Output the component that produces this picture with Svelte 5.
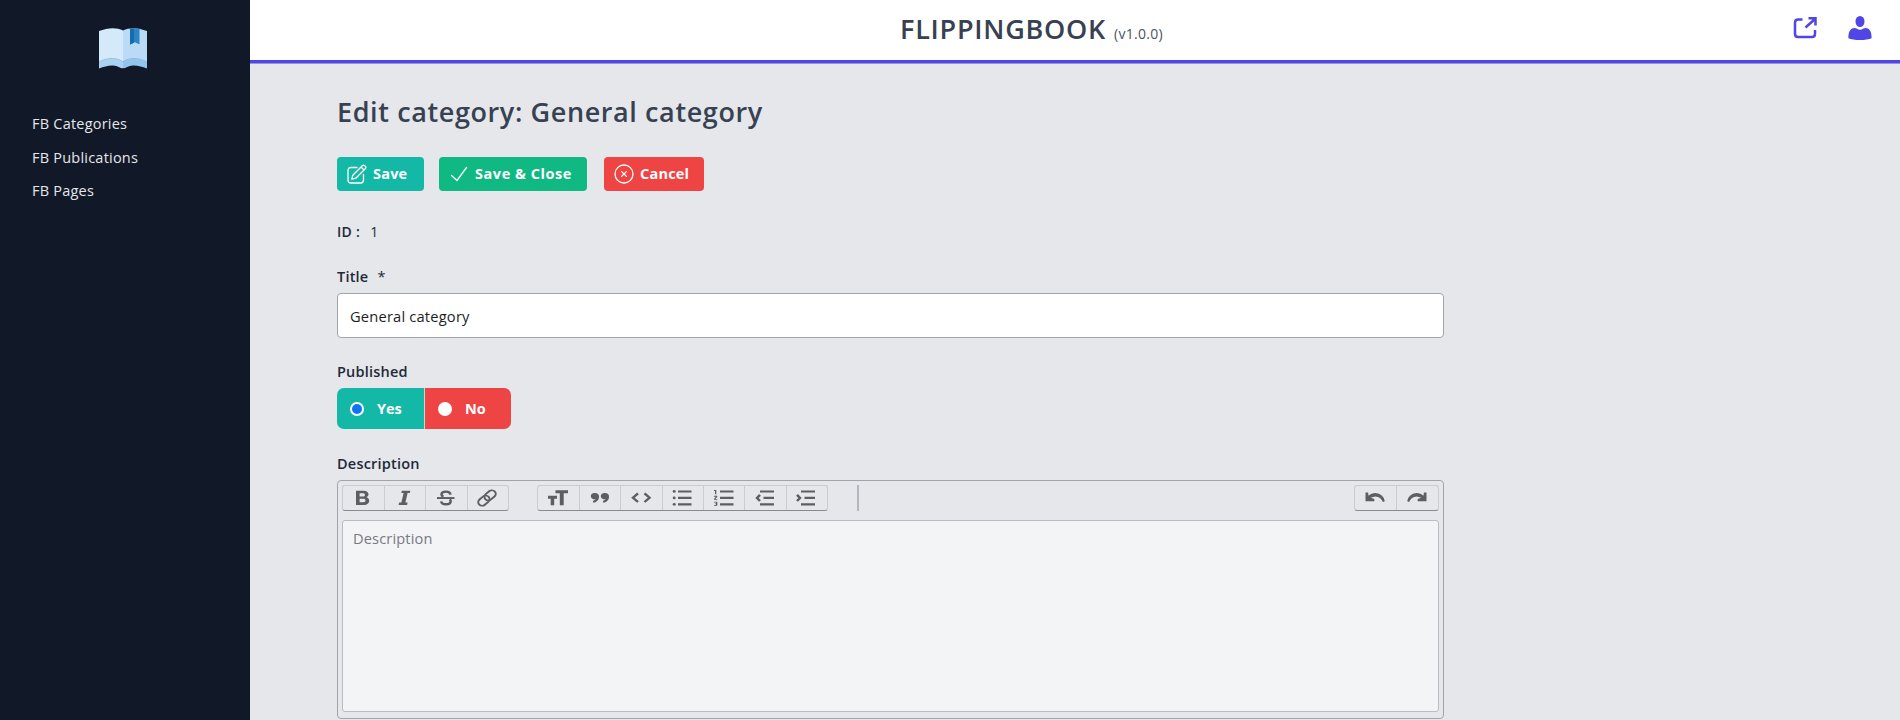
<script>
  const nav = ['FB Categories', 'FB Publications', 'FB Pages'];
  let title = $state('General category');
  let published = $state('yes');
</script>

{#snippet icon(name)}
  <svg class="tool" viewBox="0 0 24 24" preserveAspectRatio="none" aria-hidden="true">
    {#if name === 'bold'}
      <path fill-rule="evenodd" d="M5 4h7.600c3 0 4.900 1.500 4.900 4 0 1.600-.9 2.700-2.200 3.200 1.800.4 2.900 1.800 2.900 3.700 0 2.800-2 4.600-5.200 4.600H5zm3.600 2.900v3.400h3.100c1.500 0 2.200-.6 2.200-1.700s-.7-1.700-2.100-1.700zm0 6v3.700h3.600c1.500 0 2.300-.7 2.300-1.900s-.8-1.800-2.300-1.800z" />
    {:else if name === 'italic'}
      <path d="M8.800 4h8.500l-.5 2.500h-2.200l-2.200 10.500h2.200l-.5 2.500H5.600l.5-2.500h2.300l2.200-10.500H8.300z" />
    {:else if name === 'strike'}
      <path d="M3 11h17.500v2.100H3z" />
      <path class="line" d="M16.500 8.400C16.200 6 14.500 5 12 5S7.500 6 7.500 8.200q0 1.600 2 2.300M7.200 15.600c.3 2.200 2.100 3.200 4.700 3.200s4.800-1.100 4.800-3.300q0-1.200-1-2" />
    {:else if name === 'link'}
      <g class="line thin" transform="rotate(-43 12 12)">
        <rect x="1.500" y="8.100" width="12.500" height="7.800" rx="3.900" />
        <rect x="10" y="8.100" width="12.500" height="7.800" rx="3.900" />
      </g>
    {:else if name === 'heading'}
      <path d="M9.500 3.500H22v3.300h-4.300V20h-3.900V6.800H9.500zM2 9.500h9v3.300H8.200V20H4.700v-7.200H2z" />
    {:else if name === 'quote'}
      <path d="M7 6.500a4 4 0 0 1 4 4c0 3.500-2.300 6.300-6 6.500v-2c1.500-.3 2.200-.9 2.500-1.800A3.500 3.500 0 1 1 7 6.500zM17 6.500a4 4 0 0 1 4 4c0 3.500-2.300 6.300-6 6.500v-2c1.500-.3 2.200-.9 2.500-1.800A3.500 3.500 0 1 1 17 6.500z" />
    {:else if name === 'code'}
      <path class="line" d="m9 7-5 4.700 5 4.700M15.500 7l5 4.700-5 4.700" />
    {:else if name === 'bullets'}
      <path d="M8 3.700h13.500v2.400H8zM8 10.700h13.500v2.400H8zM8 17.700h13.500v2.400H8z" />
      <circle cx="4.200" cy="4.900" r="1.500" /><circle cx="4.200" cy="11.900" r="1.500" /><circle cx="4.200" cy="18.900" r="1.500" />
    {:else if name === 'numbers'}
      <path d="M8 3.700h13.500v2.400H8zM8 10.700h13.500v2.400H8zM8 17.700h13.500v2.400H8zM2 16h3.300v4.500H2v-1h2v-.6H3v-1h1V17H2zM3 8h1.300V3.300H2v1h1zM2 10.700V9.600h3.300v1.100L3.400 13h1.900v1H2v-.9l1.800-2.400z" />
    {:else if name === 'outdent'}
      <path d="M7 3.700h14v2.400H7zM10.500 10.700H21v2.400H10.500zM7 17.700h14v2.400H7z" />
      <path class="line" d="m7 8.600-3 3.300 3 3.300" />
    {:else if name === 'indent'}
      <path d="M7 3.700h14v2.400H7zM10.500 10.700H21v2.400H10.500zM7 17.700h14v2.400H7z" />
      <path class="line" d="m3 8.600 3 3.300-3 3.300" />
    {:else if name === 'undo'}
      <path d="M12.500 6.600c-2.600 0-5 1-6.900 2.900L5 6H2.500v9.500h8.800v-2.300l-3.600-1.400a8 8 0 0 1 12.100 4.500l2-.8A10 10 0 0 0 12.500 6.600z" />
    {:else}
      <path d="M11.500 6.600c2.600 0 5 1 6.900 2.900L19 6h2.500v9.500h-8.800v-2.300l3.600-1.400a8 8 0 0 0-12.100 4.500l-2-.8A10 10 0 0 1 11.500 6.600z" />
    {/if}
  </svg>
{/snippet}

{#snippet group(names)}
  <div class="group">
    {#each names as name}
      <button type="button" aria-label={name}>{@render icon(name)}</button>
    {/each}
  </div>
{/snippet}

<div class="page">
  <aside>
    <svg class="logo" viewBox="0 0 48 40" preserveAspectRatio="none" aria-hidden="true">
      <path fill="#d4e9f9" d="M0 3C9-.7 18-.7 24 2.500V35L0 36z" />
      <path fill="#b9dbf7" d="M24 2.500C30-.7 39-.7 48 3v33l-24-1z" />
      <path fill="#a9d3f4" d="M0 33.500c9-4.500 18-4.500 24 0V39c-3 1-4-2-10-2.300C9 36.500 5 38 0 39.500z" />
      <path fill="#90c5ef" d="M24 33.500c6-4.500 15-4.500 24 0v6c-5-1.500-9-3-14-2.800C28 37 27 40 24 39z" />
      <path fill="none" stroke="#86a9c6" stroke-width=".7" d="M0 33c9-4.300 18-4.300 24 0 6-4.300 15-4.300 24 0" />
      <path fill="#2b84c3" d="M31 .4h9.500v15.500L35.700 14 31 16z" />
      <path fill="#176dab" d="M31 .4h4V14.300L31 16z" />
    </svg>
    <nav>
      {#each nav as item}
        <a href="#top">{item}</a>
      {/each}
    </nav>
  </aside>

  <div class="body">
    <header>
      <div class="brand"><span class="name">FLIPPINGBOOK</span><span class="version">(v1.0.0)</span></div>
      <div class="actions">
        <svg class="ext" viewBox="0 0 24 22" aria-hidden="true">
          <path d="M9.500 2.500H5Q2 2.500 2 5.500V17q0 3 3 3h14q3 0 3-3v-4M12.500 10.500 22 2M15.500 1.300h7v7.200" />
        </svg>
        <svg class="user" viewBox="0 0 24 24" aria-hidden="true">
          <ellipse cx="12" cy="5.500" rx="4.500" ry="5.500" />
          <path d="M.4 22.200C.4 16 2 12.300 6.500 12c2 0 3 1.700 5.500 1.700s3.500-1.700 5.500-1.700c4.500.3 6.100 4 6.100 10.200C19 24.600 5 24.600.4 22.200z" />
        </svg>
      </div>
    </header>

    <main>
      <h1>Edit category: General category</h1>
      <div class="buttons">
        <button type="button" class="save">
          <svg viewBox="0 0 20 20" aria-hidden="true"><path d="M10 3.500H4Q1 3.500 1 6.500V16q0 3 3 3h9.500q3 0 3-3v-5.500M4.800 15.200l1-4L15.500 1.500q1-.9 2.200.2l.6.6q1.100 1.100.2 2.200L8.800 14.200zM14 3l3 3" /></svg>
          <span>Save</span>
        </button>
        <button type="button" class="close">
          <svg viewBox="0 0 20 20" aria-hidden="true"><path d="m2.500 11.500 5.500 5L17.500 3.500" /></svg>
          <span>Save &amp; Close</span>
        </button>
        <button type="button" class="cancel">
          <svg viewBox="0 0 20 20" aria-hidden="true"><circle cx="10" cy="10" r="9" /><path d="m7.600 7.600 4.800 4.800m0-4.800-4.800 4.800" /></svg>
          <span>Cancel</span>
        </button>
      </div>

      <div class="id"><span>ID :</span><span class="value">1</span></div>

      <label class="caption title-label" for="title">Title<span class="star">*</span></label>
      <input id="title" class="text" bind:value={title} />

      <div class="caption pub">Published</div>
      <div class="switch">
        <label class="yes"><input type="radio" value="yes" bind:group={published} /><span>Yes</span></label>
        <label class="no"><input type="radio" value="no" bind:group={published} /><span>No</span></label>
      </div>

      <div class="caption desc">Description</div>
      <div class="editor">
        <div class="toolbar">
          {@render group(['bold', 'italic', 'strike', 'link'])}
          {@render group(['heading', 'quote', 'code', 'bullets', 'numbers', 'outdent', 'indent'])}
          <i class="divider"></i>
          {@render group(['undo', 'redo'])}
        </div>
        <div class="area">Description</div>
      </div>
    </main>
  </div>
</div>

<style>
  :global(body) { margin: 0; overflow: hidden; }
  * { box-sizing: border-box; }
  .page { display: flex; height: 720px; overflow: hidden; background: #e5e7eb; color: #1f2937; font: 15px/20px "Open Sans", "Noto Sans", sans-serif; }
  button, input { font: inherit; }
  aside { width: 250px; flex: none; background: #111827; padding: 28px 0 0 32px; }
  .logo { display: block; width: 48px; height: 41px; margin-left: 67px; }
  nav { display: flex; flex-direction: column; padding-top: 38px; }
  nav a { height: 33.600px; line-height: 33px; color: #e5e7eb; text-decoration: none; white-space: nowrap; font-size: 14.500px; letter-spacing: .22px; }
  .body { flex: 1; min-width: 0; }
  header { height: 63px; background: #fff; border-bottom: 3px solid #4f46e5; box-shadow: 0 1px 0 #9692e6; display: flex; justify-content: space-between; padding: 0 28px 0 650px; }
  .brand { display: flex; align-items: baseline; color: #374151; white-space: nowrap; }
  .name { font-size: 27px; line-height: 58px; font-weight: 600; letter-spacing: .75px; }
  .version { font-size: 14px; margin-left: 8px; color: #4b5563; letter-spacing: .3px; }
  .actions { padding-top: 16px; display: flex; gap: 31px; }
  .ext { width: 24px; height: 22px; margin-top: 1px; fill: none; stroke: #4f46e5; stroke-width: 2.500; }
  .user { width: 24px; height: 24px; fill: #4f46e5; }
  main { width: 1107px; margin-left: 87px; }
  h1 { margin: 0; padding-top: 28px; font-size: 27px; line-height: 41px; height: 68px; font-weight: 600; letter-spacing: .61px; color: #374151; white-space: nowrap; }
  .buttons { display: flex; padding-top: 26px; }
  .buttons button { height: 34px; border: 0; border-radius: 4px; padding: 0 0 0 10px; color: #fff; font-weight: 700; font-size: 14.500px; letter-spacing: .2px; display: flex; align-items: center; gap: 6px; white-space: nowrap; }
  .buttons svg { width: 20px; height: 20px; flex: none; fill: none; stroke: #fff; stroke-width: 1.300; stroke-linecap: round; stroke-linejoin: round; }
  .save { width: 87px; background: #14b8a6; }
  .buttons .close { width: 148px; margin: 0 17px 0 15px; background: #10b981; letter-spacing: .55px; }
  .cancel { width: 100px; background: #ef4444; }
  .id { display: flex; gap: 10px; margin-top: 31px; font-weight: 600; font-size: 14px; letter-spacing: .3px; }
  .value { font-weight: 500; }
  .caption { display: block; font-size: 14.500px; font-weight: 600; height: 20px; white-space: nowrap; letter-spacing: .2px; }
  .title-label { margin-top: 25px; }
  .star { margin-left: 9px; font-weight: 400; }
  .text { display: block; width: 1107px; height: 45px; margin-top: 6px; border: 1px solid #a1a4aa; border-radius: 4px; background: #fff; padding: 0 12px; font-size: 14.700px; letter-spacing: .18px; color: #1c1f24; outline: 0; }
  .pub { margin-top: 24px; }
  .switch { display: flex; width: 174px; height: 41px; margin-top: 6px; border-radius: 7px; overflow: hidden; background: #cbd5d8; gap: 1px; }
  .switch label { display: flex; align-items: center; padding-left: 13px; color: #fff; font-weight: 700; font-size: 14.500px; gap: 13px; }
  .switch input { appearance: none; margin: 0; width: 14px; height: 14px; background: #fff; border-radius: 50%; flex: none; }
  .switch input:checked { background: #0d75f5; border: 2px solid #fff; }
  .yes { width: 87px; background: #14b8a6; }
  .no { flex: 1; background: #ef4444; }
  .desc { margin-top: 25px; }
  .editor { margin-top: 6px; height: 239px; border: 1px solid #a1a4aa; border-radius: 4px; padding: 4px; }
  .toolbar { display: flex; height: 26px; }
  .group { display: flex; height: 26px; border: 1px solid #c9cbcf; border-bottom-color: #888b90; border-radius: 3px; width: 167px; }
  .group:nth-child(2) { width: 291px; margin-left: 28px; }
  .group:last-child { width: 85px; margin-left: auto; }
  .group button { flex: 1; border: 0; border-right: 1px solid #cbcdd1; background: transparent; padding: 0 1px 0 0; display: flex; align-items: center; justify-content: center; }
  .group button:first-child { flex: 0 0 42px; }
  .group button:last-child { border-right: 0; }
  .tool { width: 24px; height: 22px; flex: none; fill: #5c5e62; }
  .tool .line { fill: none; stroke: #5c5e62; stroke-width: 2.500; }
  .tool .thin { stroke-width: 2; }
  .divider { width: 2px; background: #b4b6bb; margin-left: 29px; }
  .area { height: 192px; margin-top: 9px; border: 1px solid #b9bbc0; border-radius: 3px; background: #f3f4f6; padding: 7px 10px; color: #777a80; font-size: 14.600px; letter-spacing: .15px; }
</style>
